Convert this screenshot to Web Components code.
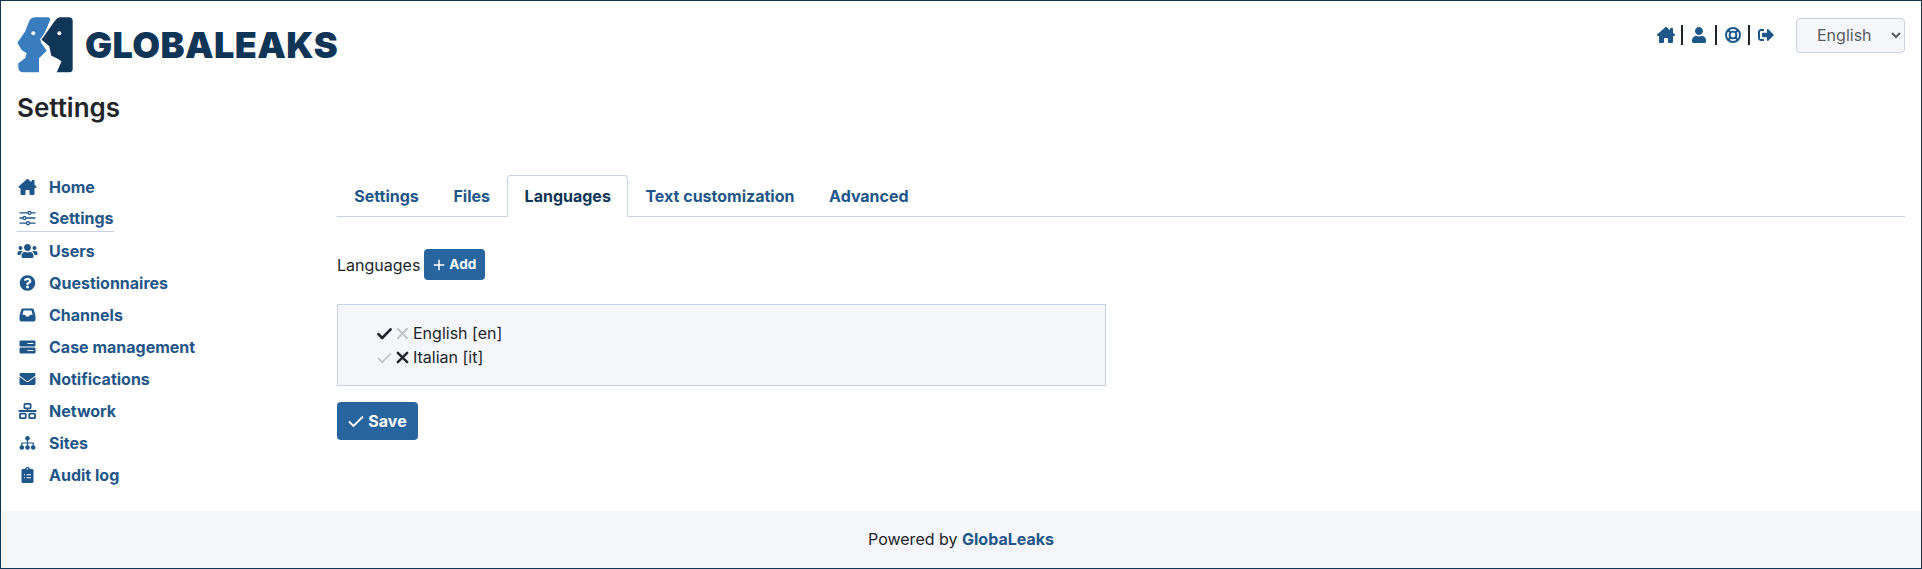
<!DOCTYPE html>
<html>
<head>
<meta charset="utf-8">
<title>Settings</title>
<style>
  html, body { margin: 0; height: 569px; overflow: hidden; }
  body { font-family: Inter, "Liberation Sans", sans-serif; font-size: 16px; color: #212529; background: #fff; }
</style>
</head>
<body>
<gl-app>
  <gl-header slot="header"></gl-header>
  <gl-sidebar slot="side">
    <gl-nav-item icon="home">Home</gl-nav-item>
    <gl-nav-item icon="sliders" active>Settings</gl-nav-item>
    <gl-nav-item icon="users">Users</gl-nav-item>
    <gl-nav-item icon="question">Questionnaires</gl-nav-item>
    <gl-nav-item icon="inbox">Channels</gl-nav-item>
    <gl-nav-item icon="server">Case management</gl-nav-item>
    <gl-nav-item icon="envelope">Notifications</gl-nav-item>
    <gl-nav-item icon="network">Network</gl-nav-item>
    <gl-nav-item icon="sitemap">Sites</gl-nav-item>
    <gl-nav-item icon="clipboard">Audit log</gl-nav-item>
  </gl-sidebar>
  <gl-main slot="main">
    <gl-tabs>
      <gl-tab>Settings</gl-tab>
      <gl-tab>Files</gl-tab>
      <gl-tab active>Languages</gl-tab>
      <gl-tab>Text customization</gl-tab>
      <gl-tab>Advanced</gl-tab>
    </gl-tabs>
    <gl-languages></gl-languages>
  </gl-main>
  <gl-footer slot="footer"></gl-footer>
</gl-app>

<script>
// font awesome style glyphs, plus a few drawn by hand
const ICONS = {
  home: ['0 0 576 512', '<path d="M575.8 255.500c0 18-15 32.100-32 32.100h-32l.7 160.200c0 2.700-.2 5.400-.5 8.100V472c0 22.100-17.900 40-40 40H456c-1.100 0-2.200 0-3.300-.1-1.400.1-2.800.1-4.200.1H392c-22.100 0-40-17.900-40-40v-88c0-17.700-14.300-32-32-32h-64c-17.700 0-32 14.300-32 32v88c0 22.100-17.900 40-40 40h-55.900c-1.500 0-3-.1-4.500-.2-1.200.1-2.400.2-3.600.2H104c-22.100 0-40-17.900-40-40V360c0-.9 0-1.900.1-2.800v-69.600H32c-18 0-32-14-32-32.100 0-9 3-17 10-24L266.400 8c7-7 15-8 22-8s15 2 21 7L416 100.700V64c0-17.700 14.300-32 32-32h32c17.700 0 32 14.300 32 32v121l52.800 46.500c8 7 12 15 11 24z"/>'],
  user: ['0 0 448 512', '<path d="M224 256c70.7 0 128-57.3 128-128S294.700 0 224 0 96 57.300 96 128s57.300 128 128 128zm89.600 32h-16.700c-22.200 10.200-46.900 16-72.900 16s-50.600-5.800-72.900-16h-16.700C60.200 288 0 348.200 0 422.400V464c0 26.500 21.500 48 48 48h352c26.500 0 48-21.500 48-48v-41.600c0-74.200-60.200-134.400-134.400-134.400z"/>'],
  ring: ['0 0 512 512', '<g fill="none" stroke="currentColor"><circle cx="256" cy="256" r="224" stroke-width="62"/><circle cx="256" cy="256" r="108" stroke-width="62"/><path stroke-width="70" d="M95 95l90 90M417 95l-90 90M95 417l90-90M417 417l-90-90"/></g>'],
  signout: ['0 0 512 512', '<path d="M497 273L329 441c-15 15-41 4.500-41-17v-96H152c-13.300 0-24-10.700-24-24v-96c0-13.300 10.700-24 24-24h136V88c0-21.400 25.900-32 41-17l168 168c9.300 9.400 9.300 24.600 0 34zM192 436v-40c0-6.600-5.400-12-12-12H96c-17.700 0-32-14.300-32-32V160c0-17.700 14.300-32 32-32h84c6.600 0 12-5.400 12-12V76c0-6.600-5.400-12-12-12H96c-53 0-96 43-96 96v192c0 53 43 96 96 96h84c6.600 0 12-5.400 12-12z"/>'],
  sliders: ['0 0 16 16', '<g fill="none" stroke="currentColor" stroke-width="1.300"><path d="M0 2.800h8.400M11.600 2.800H16M0 8h3.400M6.600 8H16M0 13.200h6.900M10.100 13.200H16"/><circle cx="10" cy="2.800" r="1.500"/><circle cx="5" cy="8" r="1.500"/><circle cx="8.500" cy="13.200" r="1.500"/></g>'],
  users: ['0 0 640 512', '<path d="M96 224c35.300 0 64-28.700 64-64s-28.700-64-64-64-64 28.700-64 64 28.700 64 64 64zm448 0c35.300 0 64-28.700 64-64s-28.700-64-64-64-64 28.700-64 64 28.700 64 64 64zm32 32h-64c-17.600 0-33.500 7.100-45.100 18.600 40.300 22.100 68.900 62 75.100 109.400h66c17.700 0 32-14.300 32-32v-32c0-35.300-28.700-64-64-64zm-256 0c61.900 0 112-50.100 112-112S381.900 32 320 32 208 82.100 208 144s50.100 112 112 112zm76.800 32h-8.300c-20.800 10-43.900 16-68.500 16s-47.600-6-68.500-16h-8.300C179.600 288 128 339.600 128 403.200V432c0 26.500 21.500 48 48 48h288c26.500 0 48-21.500 48-48v-28.800c0-63.600-51.600-115.200-115.200-115.200zm-223.700-13.400C161.500 263.100 145.600 256 128 256H64c-35.300 0-64 28.700-64 64v32c0 17.700 14.300 32 32 32h65.900c6.300-47.400 34.900-87.300 75.200-109.400z"/>'],
  question: ['0 0 512 512', '<path d="M504 256c0 136.997-111.043 248-248 248S8 392.997 8 256C8 119.083 119.043 8 256 8s248 111.083 248 248zM262.655 90c-54.497 0-89.255 22.957-116.549 63.758-3.536 5.286-2.353 12.415 2.715 16.258l34.699 26.310c5.205 3.947 12.621 3.008 16.665-2.122 17.864-22.658 30.113-35.797 57.303-35.797 20.429 0 45.698 13.148 45.698 32.958 0 14.976-12.363 22.667-32.534 33.976C247.128 238.528 216 254.941 216 296v4c0 6.627 5.373 12 12 12h56c6.627 0 12-5.373 12-12v-1.333c0-28.462 83.186-29.647 83.186-106.667 0-58.002-60.165-102-116.531-102zM256 338c-25.365 0-46 20.635-46 46 0 25.364 20.635 46 46 46s46-20.636 46-46c0-25.365-20.635-46-46-46z"/>'],
  inbox: ['0 0 16 16', '<path fill-rule="evenodd" d="M3.600 1.500h8.800c.8 0 1.500.4 1.900 1l1.300 5c.3.500.4 1 .4 1.600v3.400c0 1.100-.9 2-2 2H2c-1.100 0-2-.9-2-2V9.100c0-.6.100-1.100.4-1.600l1.300-5c.4-.6 1.100-1 1.900-1zM4 3.500 2.900 7.800H5.500l1 1.700h3l1-1.700h2.600L12 3.500z"/>'],
  server: ['0 0 16 16', '<path fill-rule="evenodd" d="M1.300 1.500h13.400c.7 0 1.300.6 1.300 1.300v3.400c0 .7-.6 1.300-1.300 1.300H1.300C.6 7.500 0 6.900 0 6.200V2.800c0-.7.600-1.300 1.300-1.300zM8 4v1h6V4zM1.300 8.600h13.400c.7 0 1.300.6 1.300 1.300v3.400c0 .7-.6 1.300-1.300 1.300H1.300c-.7 0-1.300-.6-1.300-1.300V9.900c0-.7.600-1.300 1.300-1.300zM8 11.100v1h6v-1z"/>'],
  envelope: ['0 0 512 512', '<path d="M502.300 190.800c3.900-3.100 9.700-.2 9.700 4.700V400c0 26.500-21.500 48-48 48H48c-26.500 0-48-21.500-48-48V195.600c0-5 5.700-7.800 9.700-4.700 22.400 17.400 52.100 39.500 154.100 113.600 21.100 15.400 56.700 47.800 92.200 47.600 35.700.3 72-32.800 92.300-47.600 102-74.100 131.600-96.300 154-113.700zM256 320c23.200.4 56.600-29.200 73.400-41.400 132.700-96.300 142.800-104.700 173.400-128.700 5.800-4.500 9.200-11.500 9.200-18.900v-19c0-26.500-21.500-48-48-48H48C21.500 64 0 85.500 0 112v19c0 7.400 3.400 14.300 9.200 18.900 30.600 23.900 40.700 32.400 173.400 128.700 16.800 12.200 50.200 41.800 73.400 41.400z"/>'],
  network: ['0 0 20 18', '<g fill="none" stroke="currentColor" stroke-width="2"><rect x="6.500" y="1" width="7" height="5" rx=".8"/><rect x="1.500" y="12" width="6.500" height="5" rx=".8"/><rect x="12" y="12" width="6.500" height="5" rx=".8"/><path d="M10 6v3.200M0 9h20"/></g>'],
  sitemap: ['0 0 18 18', '<circle cx="9" cy="3.600" r="2.600"/><circle cx="2.600" cy="14" r="2.600"/><circle cx="9" cy="14" r="2.600"/><circle cx="15.400" cy="14" r="2.600"/><path fill="none" stroke="currentColor" stroke-width="1.400" d="M9 5v7M2.600 12V9h12.800v3"/>'],
  clipboard: ['0 0 384 512', '<path fill-rule="evenodd" d="M48 64h64C112 28 148 0 192 0s80 28 80 64h64c26.500 0 48 21.500 48 48v352c0 26.500-21.500 48-48 48H48c-26.500 0-48-21.500-48-48V112c0-26.500 21.500-48 48-48zM192 40a24 24 0 1 0 0 48 24 24 0 0 0 0-48zM80 232v32h32v-32zm80 0v32h144v-32zM80 328v32h32v-32zm80 0v32h144v-32z"/>'],
  check: ['0 0 16 16', '<path d="M13.500 2.600a1.400 1.400 0 0 1 2 2l-9 9.200a1.400 1.400 0 0 1-2 0L.5 9.700a1.400 1.400 0 0 1 2-2l3 3z"/>'],
  thincheck: ['0 0 16 16', '<path fill="none" stroke="currentColor" stroke-width="1.800" d="M1 8.500l4.500 4.500L15 3.500"/>'],
  times: ['0 0 16 16', '<path fill="none" stroke="currentColor" stroke-width="2.600" stroke-linecap="round" d="M3 3l10 10M13 3L3 13"/>'],
  thintimes: ['0 0 16 16', '<path fill="none" stroke="currentColor" stroke-width="2.200" d="M2.500 2.500l11 11M13.500 2.500l-11 11"/>'],
  plus: ['0 0 16 16', '<path fill="none" stroke="currentColor" stroke-width="2" d="M8 1v14M1 8h14"/>']
};

class GlIcon extends HTMLElement {
  connectedCallback() {
    const [box, body] = ICONS[this.getAttribute('name')];
    this.attachShadow({ mode: 'open' }).innerHTML = `
      <style>
        :host { display: inline-flex; align-items: center; justify-content: center; width: var(--icon-w, 16px); height: var(--icon-h, 16px); }
        svg { width: 100%; height: 100%; fill: currentColor; display: block; }
      </style>
      <svg viewBox="${box}" xmlns="http://www.w3.org/2000/svg">${body}</svg>`;
  }
}

class GlApp extends HTMLElement {
  constructor() {
    super();
    this.attachShadow({ mode: 'open' }).innerHTML = `
      <style>
        :host { display: flex; flex-direction: column; box-sizing: border-box; height: 569px; border: 1px solid #0f3557; }
        .body { flex: 1; display: grid; grid-template-columns: 320px 1fr; padding: 0 16px; }
      </style>
      <slot name="header"></slot>
      <div class="body">
        <slot name="side"></slot>
        <slot name="main"></slot>
      </div>
      <slot name="footer"></slot>`;
  }
}

class GlHeader extends HTMLElement {
  constructor() {
    super();
    this.attachShadow({ mode: 'open' }).innerHTML = `
      <style>
        :host { display: block; padding: 16px 16px 0; }
        .top { display: flex; justify-content: space-between; align-items: flex-start; }
        .brand { display: flex; align-items: center; gap: 12px; height: 56px; }
        .brand svg { width: 56px; height: 56px; display: block; }
        .word { font: 900 36px/1 Inter, sans-serif; color: #0f3557; letter-spacing: .4px; }
        .tools { display: flex; align-items: center; height: 36px; }
        .links { display: flex; align-items: center; color: #1f5689; margin-right: 21px; }
        .links gl-icon { --icon-h: 16px; --icon-w: 18px; }
        .links i { width: 2px; height: 20px; background: #212529; margin: 0 7px 0 6.500px; }
        select { appearance: auto; width: 109px; height: 35px; box-sizing: border-box; border: 1px solid #c8d2e4; border-radius: 4px; background: #f5f6fa; color: #595c5f; font: 400 16px Inter, sans-serif; padding: 0 0 0 16px; }
        h1 { margin: 17px 0 0; font: 600 26px/36px Inter, sans-serif; color: #212529; }
      </style>
      <div class="top">
        <div class="brand">
          <svg viewBox="51 51 168 168" xmlns="http://www.w3.org/2000/svg">
            <path fill="#3a7dbf" d="M105 52h38c7 0 9 6 6 12l-27 62 18 26-23 23v42H70c-9 0-15-6-15-15v-12l20-15 5-15-15-10-13-22 23-33 10-25c3-12 10-18 20-18z"/>
            <circle cx="100" cy="100" r="6" fill="#fff"/>
            <path fill="#0f3557" stroke="#fff" stroke-width="4" d="M180 50h27c8 0 13 5 13 13v144c0 7-5 12-12 12h-41l15-34-10-7-20-10-6-28-24-21 30-42c10-16 18-27 28-27z"/>
            <circle cx="178" cy="100" r="6" fill="#fff"/>
          </svg>
          <span class="word">GLOBALEAKS</span>
        </div>
        <div class="tools">
          <div class="links">
            <gl-icon name="home"></gl-icon><i></i>
            <gl-icon name="user"></gl-icon><i></i>
            <gl-icon name="ring"></gl-icon><i></i>
            <gl-icon name="signout"></gl-icon>
          </div>
          <select><option>English</option></select>
        </div>
      </div>
      <h1>Settings</h1>`;
  }
}

class GlSidebar extends HTMLElement {
  constructor() {
    super();
    this.attachShadow({ mode: 'open' }).innerHTML = `
      <style>
        :host { display: flex; flex-direction: column; align-items: flex-start; padding-top: 47px; }
      </style>
      <slot></slot>`;
  }
}

class GlNavItem extends HTMLElement {
  connectedCallback() {
    const icon = this.getAttribute('icon');
    this.attachShadow({ mode: 'open' }).innerHTML = `
      <style>
        :host { display: block; height: 32px; }
        .row { display: inline-flex; align-items: center; gap: 11px; height: 27px; color: #1f5689; font: 700 16px/24px Inter, sans-serif; box-sizing: border-box; }
        :host([active]) .row { border-bottom: 1px solid #c8d2e4; }
        gl-icon { --icon-w: 21px; --icon-h: 16px; }
      </style>
      <div class="row"><gl-icon name="${icon}"></gl-icon><slot></slot></div>`;
  }
}

class GlMain extends HTMLElement {
  constructor() {
    super();
    this.attachShadow({ mode: 'open' }).innerHTML = `
      <style>
        :host { display: block; padding-top: 49px; }
      </style>
      <slot></slot>`;
  }
}

class GlTabs extends HTMLElement {
  constructor() {
    super();
    this.attachShadow({ mode: 'open' }).innerHTML = `
      <style>
        :host { display: flex; border-bottom: 1px solid #c8d2e4; }
      </style>
      <slot></slot>`;
  }
}

class GlTab extends HTMLElement {
  constructor() {
    super();
    this.attachShadow({ mode: 'open' }).innerHTML = `
      <style>
        :host { display: block; box-sizing: border-box; height: 42px; margin-bottom: -1px; padding: 0 16.300px; border: 1px solid transparent; border-radius: 4px 4px 0 0; color: #1f5689; font: 700 16px/40px Inter, sans-serif; }
        :host([active]) { background: #fff; color: #0f3557; border-color: #c8d2e4 #c8d2e4 #fff; }
      </style>
      <slot></slot>`;
  }
}

class GlButton extends HTMLElement {
  connectedCallback() {
    const icon = this.getAttribute('icon');
    this.attachShadow({ mode: 'open' }).innerHTML = `
      <style>
        :host { display: inline-flex; align-items: center; justify-content: center; gap: 4px; box-sizing: border-box; background: #28659f; color: #fff; border-radius: 4px; font: 700 16px/1 Inter, sans-serif; --icon-w: 15px; --icon-h: 15px; }
      </style>
      <gl-icon name="${icon}"></gl-icon><slot></slot>`;
  }
}

class GlLanguages extends HTMLElement {
  constructor() {
    super();
    this.attachShadow({ mode: 'open' }).innerHTML = `
      <style>
        :host { display: block; padding-top: 32px; font: 400 16px/24px Inter, sans-serif; }
        .head { display: flex; align-items: center; gap: 4px; height: 31px; }
        .add { width: 61px; height: 31px; font-size: 13.600px; --icon-w: 12px; --icon-h: 12px; }
        .box { box-sizing: border-box; width: 769px; height: 82px; margin-top: 24px; padding: 16px 39px; background: #f5f6fa; border: 1px solid #c8d2e4; }
        .lang { display: flex; align-items: center; height: 24px; --icon-w: 15px; --icon-h: 15px; color: #212529; }
        .lang gl-icon { margin-right: 3px; }
        .off { color: #c4c6c9; }
        .save { display: flex; width: 81px; height: 38px; margin-top: 16px; --icon-w: 16px; --icon-h: 16px; }
      </style>
      <div class="head">Languages <gl-button class="add" icon="plus">Add</gl-button></div>
      <div class="box">
        <div class="lang"><gl-icon name="check"></gl-icon><gl-icon class="off" name="thintimes"></gl-icon>English [en]</div>
        <div class="lang"><gl-icon class="off" name="thincheck"></gl-icon><gl-icon name="times"></gl-icon>Italian [it]</div>
      </div>
      <gl-button class="save" icon="thincheck">Save</gl-button>`;
  }
}

class GlFooter extends HTMLElement {
  constructor() {
    super();
    this.attachShadow({ mode: 'open' }).innerHTML = `
      <style>
        :host { display: block; height: 57px; background: #f5f6fa; text-align: center; font: 400 16px/57px Inter, sans-serif; color: #212529; }
        b { font-weight: 700; color: #1f5689; }
      </style>
      Powered by <b>GlobaLeaks</b>`;
  }
}

customElements.define('gl-icon', GlIcon);
customElements.define('gl-app', GlApp);
customElements.define('gl-header', GlHeader);
customElements.define('gl-sidebar', GlSidebar);
customElements.define('gl-nav-item', GlNavItem);
customElements.define('gl-main', GlMain);
customElements.define('gl-tabs', GlTabs);
customElements.define('gl-tab', GlTab);
customElements.define('gl-button', GlButton);
customElements.define('gl-languages', GlLanguages);
customElements.define('gl-footer', GlFooter);
</script>
</body>
</html>
